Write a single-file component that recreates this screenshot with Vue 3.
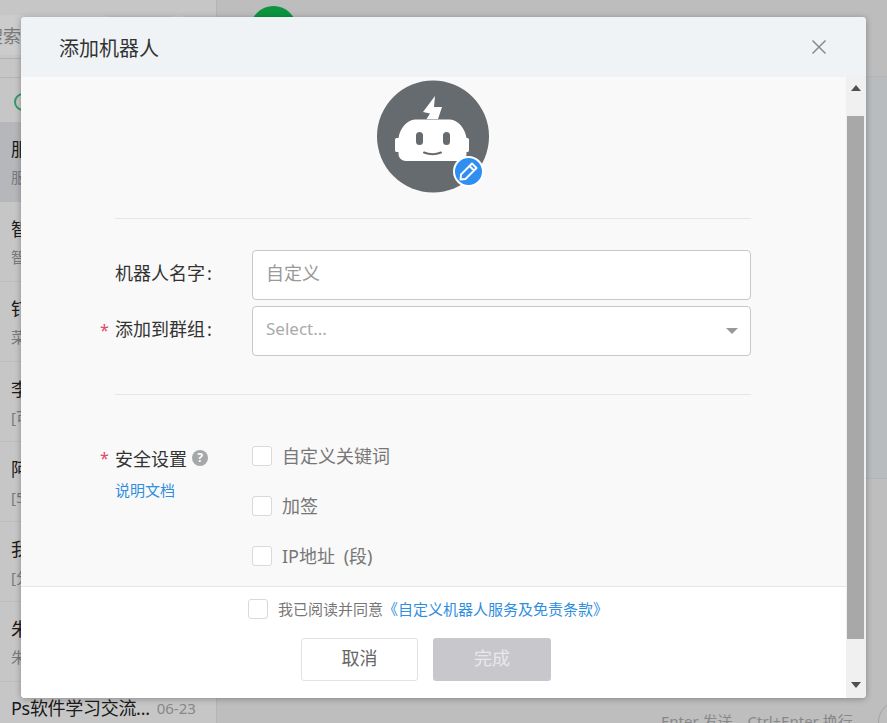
<script setup>
const rows = [
  { name: '服务通知', sub: '服务通知消息', active: true },
  { name: '智能客服', sub: '智能客服消息' },
  { name: '钉钉助手', sub: '菜单更新' },
  { name: '李明', sub: '[可以]' },
  { name: '阿杰', sub: '[5条]' },
  { name: '我的群', sub: '[分享]' },
  { name: '朱老师', sub: '朱老师消息' }
]
const checks = ['自定义关键词', '加签', 'IP地址 (段)']
</script>

<template>
  <div class="app">
    <aside class="side">
      <div class="search">
        <div class="search-box">搜索</div>
        <div class="search-btn"></div>
      </div>
      <div class="filter"><span class="ring"></span></div>
      <div v-for="r in rows" :key="r.name" class="row" :class="{ active: r.active }">
        <div class="row-name">{{ r.name }}</div>
        <div class="row-sub">{{ r.sub }}</div>
      </div>
      <div class="row-last">
        <span class="row-name last-name">Ps软件学习交流...</span>
        <span class="row-date">06-23</span>
      </div>
    </aside>
    <main class="main">
      <header class="main-head"><span class="head-avatar"></span></header>
      <div class="main-msgs"></div>
      <div class="composer">
        <div class="composer-space"></div>
        <div class="composer-hint">
          <span>Enter 发送，Ctrl+Enter 换行</span>
          <span class="send-btn"></span>
        </div>
      </div>
    </main>

    <div class="overlay"></div>

    <section class="modal">
      <header class="modal-head">
        <span class="modal-title">添加机器人</span>
        <svg class="close" width="16" height="16" viewBox="0 0 16 16">
          <path d="M1.5 1.5 14.5 14.5M14.5 1.5 1.5 14.5" fill="none" stroke="#858b90" stroke-width="1.5" />
        </svg>
      </header>
      <div class="modal-main">
        <div class="modal-left">
          <div class="modal-body">
            <div class="form">
              <div class="avatar-wrap">
                <div class="avatar">
                  <svg width="112" height="113" viewBox="0 0 112 113">
                    <circle cx="56" cy="56.5" r="56" fill="#666b70" />
                    <path d="M58 16 46 32 53 33.500 49.500 39H61L65 27 57 27Z" fill="#fff" />
                    <path d="M38 39.500H73C81 40 88 48 89.500 58H90.500C91.500 58 92 59 92 60V70C92 71 91.500 72 90.500 72H89.500V74C89.500 78 86 81 82 81H29C25 81 21.500 78 21.500 74V72H19.500C18.500 72 18 71 18 70V60C18 59 18.500 58 19.500 58H21.500C23 48 30 40 38 39.500Z" fill="#fff" />
                    <rect x="39" y="52" width="7" height="13" rx="3.500" fill="#666b70" />
                    <rect x="66" y="52" width="7" height="13" rx="3.500" fill="#666b70" />
                    <path d="M47 72.500C52 74.500 59 74.500 64 72.500" fill="none" stroke="#666b70" stroke-width="2" stroke-linecap="round" />
                  </svg>
                  <span class="badge">
                    <svg width="21" height="21" viewBox="0 0 21 21">
                      <path d="M14 2.500 18.500 7 7.500 18 2.500 18.500 3 13.500ZM11.500 5 16 9.500" fill="none" stroke="#fff" stroke-width="1.900" stroke-linejoin="round" />
                    </svg>
                  </span>
                </div>
              </div>
              <div class="rule first"></div>
              <div class="field">
                <label class="label">机器人名字<span class="colon">:</span></label>
                <input class="input" placeholder="自定义" />
              </div>
              <div class="field second">
                <label class="label"><span class="star">*</span>添加到群组<span class="colon">:</span></label>
                <div class="select">
                  <span>Select...</span>
                  <span class="caret"></span>
                </div>
              </div>
              <div class="rule last"></div>
              <div class="security">
                <div class="sec-label">
                  <div class="label sec-title">
                    <span class="star">*</span>安全设置
                    <span class="help">?</span>
                  </div>
                  <a class="doc">说明文档</a>
                </div>
                <div class="sec-checks">
                  <div v-for="c in checks" :key="c" class="check-row">
                    <span class="box"></span>
                    <span class="check-text">{{ c }}</span>
                  </div>
                </div>
              </div>
            </div>
          </div>
          <footer class="modal-foot">
            <div class="agree">
              <span class="box"></span>
              <span class="agree-text">我已阅读并同意</span>
              <a class="agree-link">《自定义机器人服务及免责条款》</a>
            </div>
            <div class="actions">
              <button class="btn cancel">取消</button>
              <button class="btn done">完成</button>
            </div>
          </footer>
        </div>
        <div class="scrollbar">
          <span class="arrow up"></span>
          <div class="thumb"></div>
          <span class="arrow down"></span>
        </div>
      </div>
    </section>
  </div>
</template>

<style>
html, body { margin: 0; padding: 0; overflow: hidden; }
</style>

<style scoped>
.app {
  position: relative;
  display: flex;
  width: 887px;
  height: 723px;
  overflow: hidden;
  font-family: "Noto Sans", "Noto Sans CJK SC", sans-serif;
  background: #eee;
  color: #222;
}
.side {
  width: 216px;
  flex: none;
  box-sizing: content-box;
  background: #f8f8f8;
  border-right: 1px solid #e2e2e2;
  overflow: hidden;
}
.search {
  height: 59px;
  box-sizing: border-box;
  padding-top: 15px;
  display: flex;
  gap: 47px;
  border-bottom: 1px solid #dedede;
}
.search-box {
  width: 135px;
  height: 40px;
  margin-left: -15px;
  flex: none;
  border-radius: 20px;
  background: #fff;
  color: #999;
  font-size: 18px;
  line-height: 42px;
}
.search-btn {
  width: 23px;
  height: 23px;
  flex: none;
  border-radius: 50%;
  background: #fff;
}
.filter {
  height: 45px;
  box-sizing: border-box;
  margin-top: 18px;
  padding-top: 15px;
  padding-left: 14px;
  border-top: 1px solid #e4e4e4;
}
.ring {
  display: block;
  width: 18px;
  height: 18px;
  box-sizing: border-box;
  border: 2px solid #3fbf85;
  border-radius: 50%;
}
.row {
  height: 80px;
  box-sizing: border-box;
  padding: 14px 0 0 11px;
  border-bottom: 1px solid #ebebeb;
}
.row.active {
  background: #e3e5ea;
  border-bottom-color: #e3e5ea;
}
.row-name {
  font-size: 18px;
  line-height: 26px;
  color: #222;
}
.last-name { letter-spacing: -0.3px; }
.row-sub {
  margin-top: 3px;
  font-size: 15px;
  line-height: 24px;
  color: #999;
}
.row-last {
  height: 41px;
  display: flex;
  gap: 7px;
  padding: 13px 0 0 11px;
  white-space: nowrap;
}
.row-date {
  font-size: 15px;
  line-height: 26px;
  color: #aaa;
}
.main {
  flex: 1;
  display: flex;
  flex-direction: column;
  min-width: 0;
}
.main-head {
  height: 77px;
  box-sizing: border-box;
  flex: none;
  padding: 6px 0 0 33px;
  background: #ededed;
  border-bottom: 1px solid #e4e4e4;
}
.head-avatar {
  display: block;
  width: 47px;
  height: 47px;
  border-radius: 50%;
  background: #10b950;
}
.main-msgs {
  height: 401px;
  flex: none;
  background: #e7ebee;
}
.composer {
  flex: 1;
  background: #eee;
  border-top: 1px solid #e0e0e0;
  display: flex;
  flex-direction: column;
}
.composer-space { height: 230px; flex: none; }
.composer-hint {
  display: flex;
  padding-left: 444px;
  font-size: 15px;
  line-height: 24px;
  color: #aaa;
  white-space: nowrap;
}
.send-btn {
  flex: none;
  width: 40px;
  height: 40px;
  margin-left: 25px;
  border: 1px solid #ccc;
  border-radius: 50%;
  margin-top: -8px;
}
.overlay {
  position: absolute;
  inset: 0;
  background: rgba(0, 0, 0, 0.2);
}
.modal {
  position: absolute;
  left: 21px;
  top: 17px;
  width: 845px;
  height: 681px;
  display: flex;
  flex-direction: column;
  border-radius: 4px;
  overflow: hidden;
  background: #fff;
  box-shadow: 0 1px 6px rgba(0, 0, 0, 0.3);
}
.modal-head {
  height: 60px;
  flex: none;
  display: flex;
  align-items: center;
  justify-content: space-between;
  padding: 0 39px 0 38px;
  background: #eff3f6;
}
.modal-title {
  font-size: 20px;
  color: #333;
}
.modal-main {
  flex: 1;
  display: flex;
  min-height: 0;
}
.modal-left {
  width: 825px;
  flex: none;
  display: flex;
  flex-direction: column;
}
.modal-body {
  height: 509px;
  flex: none;
  overflow: hidden;
  background: #f9f9f9;
}
.form {
  width: 636px;
  margin-left: 94px;
}
.avatar-wrap {
  display: flex;
  justify-content: center;
  padding-top: 3px;
  height: 113px;
}
.avatar {
  position: relative;
  width: 112px;
  height: 113px;
  margin-left: -1px;
}
.avatar svg { display: block; }
.badge {
  position: absolute;
  left: 76px;
  top: 76px;
  width: 31px;
  height: 31px;
  box-sizing: border-box;
  border: 2px solid #fff;
  border-radius: 50%;
  background: #2f8ff0;
  display: flex;
  align-items: center;
  justify-content: center;
}
.rule {
  height: 1px;
  background: #e6e6e6;
}
.rule.first { margin: 25px 0 31px; }
.rule.last { margin: 38px 0 0; }
.field {
  display: flex;
  align-items: center;
}
.field.second { margin-top: 6px; }
.label {
  width: 137px;
  flex: none;
  box-sizing: border-box;
  padding-bottom: 6px;
  font-size: 18px;
  color: #333;
  white-space: nowrap;
}
.colon { margin-left: 2px; }
.star {
  display: inline-block;
  width: 15px;
  margin-left: -15px;
  color: #e0476a;
  font-size: 16px;
}
.input, .select {
  flex: 1;
  min-width: 0;
  height: 50px;
  box-sizing: border-box;
  padding: 0 13px;
  background: #fff;
  border: 1px solid #c8c8c8;
  border-radius: 4px;
  font-family: inherit;
  outline: none;
}
.input { font-size: 18px; color: #333; padding-bottom: 4px; }
.input::placeholder { color: #999; opacity: 1; }
.select {
  display: flex;
  align-items: center;
  justify-content: space-between;
  padding-right: 12px;
  padding-bottom: 6px;
  font-size: 17px;
  color: #aaa;
}
.caret {
  width: 0;
  height: 0;
  margin-top: 5px;
  border-left: 6px solid transparent;
  border-right: 6px solid transparent;
  border-top: 6px solid #999;
}
.security {
  display: flex;
  padding-top: 51px;
}
.sec-label { width: 137px; flex: none; }
.sec-title {
  display: flex;
  align-items: center;
  height: 26px;
  padding-bottom: 0;
  margin-top: -1px;
}
.help {
  width: 16px;
  height: 16px;
  margin-left: 5px;
  border-radius: 50%;
  background: #a5a8ab;
  color: #fff;
  font-size: 12px;
  font-weight: 700;
  line-height: 16px;
  text-align: center;
}
.doc {
  display: block;
  margin-top: 8px;
  font-size: 15px;
  line-height: 22px;
  color: #2f8ee0;
}
.sec-checks {
  display: flex;
  flex-direction: column;
  gap: 24px;
}
.check-row {
  display: flex;
  align-items: center;
  gap: 10px;
  height: 26px;
  font-size: 18px;
  color: #777;
  margin-top: -3px;
  margin-bottom: 3px;
  white-space: nowrap;
  word-spacing: 4px;
}
.check-text { padding-bottom: 2px; }
.box {
  display: block;
  width: 20px;
  height: 20px;
  flex: none;
  box-sizing: border-box;
  background: #fff;
  border: 1px solid #d9d9d9;
  border-radius: 3px;
}
.modal-foot {
  flex: 1;
  box-sizing: border-box;
  background: #fff;
  border-top: 1px solid #e6e6e6;
}
.agree {
  display: flex;
  align-items: center;
  height: 20px;
  margin-top: 12px;
  padding-left: 227px;
  font-size: 15px;
  white-space: nowrap;
}
.agree-text { margin-left: 10px; color: #777; padding-bottom: 2px; }
.agree-link { color: #2f8ee0; padding-bottom: 2px; }
.actions {
  display: flex;
  gap: 15px;
  margin-top: 19px;
  padding-left: 280px;
}
.btn {
  height: 43px;
  box-sizing: border-box;
  border-radius: 3px;
  font-family: inherit;
  font-size: 18px;
  padding: 0 0 6px;
}
.cancel {
  width: 117px;
  background: #fff;
  border: 1px solid #e2e2e2;
  color: #666;
}
.done {
  width: 118px;
  background: #c8c8cc;
  border: 0;
  color: #e8e8ea;
}
.scrollbar {
  flex: 1;
  display: flex;
  flex-direction: column;
  align-items: center;
  background: #f0f0f0;
  padding-right: 1px;
}
.arrow {
  display: block;
  width: 0;
  height: 0;
  flex: none;
  border-left: 5px solid transparent;
  border-right: 5px solid transparent;
}
.arrow.up {
  margin-top: 8px;
  border-bottom: 6px solid #505050;
}
.thumb {
  width: 17px;
  height: 523px;
  margin-top: 25px;
  background: #a8a8a8;
  flex: none;
}
.arrow.down {
  margin-top: 43px;
  border-top: 6px solid #505050;
}
</style>
